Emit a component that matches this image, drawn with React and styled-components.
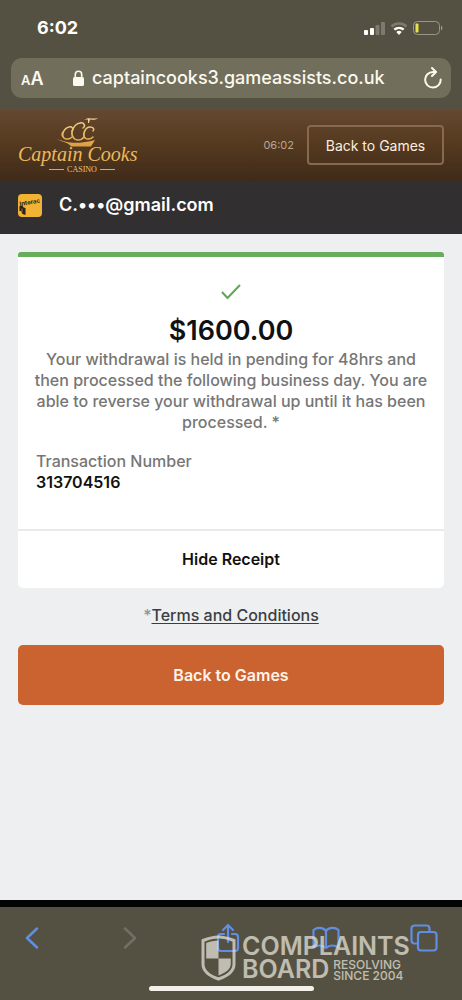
import React from "react";
import styled, { createGlobalStyle } from "styled-components";

const GlobalStyle = createGlobalStyle`
  * { box-sizing: border-box; }
  body {
    margin: 0;
    font-family: Inter, "Liberation Sans", sans-serif;
    background: #edeff1;
  }
  button {
    font-family: inherit;
    margin: 0;
    padding: 0;
    border: 0;
    background: none;
    cursor: pointer;
  }
`;

const Page = styled.div`
  min-height: 100vh;
  display: flex;
  flex-direction: column;
`;

const BrowserTop = styled.div`
  background: #555142;
  padding: 0 11px 12px;
`;

const StatusBar = styled.div`
  height: 58px;
  padding: 0 8px 3px 26px;
  display: flex;
  align-items: center;
  justify-content: space-between;
`;

const Clock = styled.time`
  color: #fff;
  font-size: 18px;
  font-weight: 700;
`;

const AddressBar = styled.form`
  height: 40px;
  border-radius: 11px;
  background: #716e5c;
  padding: 0 4px 0 10px;
  display: flex;
  align-items: center;
  color: #fbf9ee;
`;

const TextSizeButton = styled.button`
  display: flex;
  align-items: baseline;
  color: inherit;
  font-weight: 600;
  font-size: 13px;
  width: 52px;

  span {
    font-size: 18px;
  }
`;

const AddressInput = styled.input`
  flex: 1;
  min-width: 0;
  margin: 0 8px;
  padding: 0;
  border: 0;
  outline: 0;
  background: none;
  color: inherit;
  font: 500 18px/24px Inter, "Liberation Sans", sans-serif;
`;

const IconButton = styled.button`
  width: 28px;
  height: 32px;
  display: flex;
  align-items: center;
  justify-content: center;
  color: ${(p) => p.$color || "inherit"};
`;

const SiteHeader = styled.header`
  height: 71px;
  padding: 0 18px 1px;
  background: linear-gradient(#64482f, #54391f 50%, #3f2b1a);
  display: flex;
  align-items: center;
  justify-content: space-between;
`;

const HeaderActions = styled.div`
  display: flex;
  align-items: center;
  gap: 13px;
`;

const SessionTime = styled.time`
  color: #b9a692;
  font-size: 11px;
`;

const OutlineButton = styled.button`
  width: 137px;
  height: 40px;
  border: 2px solid #87694e;
  border-radius: 4px;
  color: #fbeee0;
  font-size: 14px;
`;

const AccountBar = styled.div`
  height: 53px;
  padding: 0 18px 6px;
  background: #312f30;
  display: flex;
  align-items: center;
  gap: 17px;
  color: #fff;
  font-size: 18px;
  font-weight: 600;
`;

const Main = styled.main`
  flex: 1;
  padding: 18px;
  border-bottom: 7px solid #030504;
`;

const Card = styled.section`
  background: #fff;
  border-top: 5px solid #67ad5b;
  border-radius: 3px 3px 5px 5px;
`;

const CardBody = styled.div`
  padding: 24px 12px 36px;
  display: flex;
  flex-direction: column;
`;

const CheckMark = styled.svg`
  align-self: center;
`;

const Amount = styled.h1`
  margin: 10px 0 0;
  text-align: center;
  font-size: 27px;
  line-height: 36px;
  font-weight: 600;
  color: #111;
`;

const Message = styled.p`
  margin: 0 0 18px;
  text-align: center;
  font-size: 16px;
  line-height: 21px;
  font-weight: 500;
  color: #767676;
`;

const Details = styled.dl`
  margin: 0;
  padding: 0 6px;
  font-size: 16px;
  line-height: 21px;
  font-weight: 500;

  dt { color: #767676; }
  dd { margin: 0; color: #111; font-weight: 600; }
`;

const ReceiptToggle = styled.button`
  width: 100%;
  height: 59px;
  padding-bottom: 2px;
  border-top: 2px solid #e9eaeb;
  font-size: 16px;
  font-weight: 600;
  color: #111;
`;

const Terms = styled.p`
  margin: 17px 0 19px;
  text-align: center;
  font-size: 16px;
  line-height: 21px;
  font-weight: 500;
  color: #8d9698;

  a { color: #3b3e40; text-underline-offset: 2px; }
`;

const PrimaryButton = styled.button`
  width: 100%;
  height: 60px;
  border-radius: 5px;
  background: #cb6330;
  color: #fff3e8;
  font-size: 16px;
  font-weight: 600;
`;

const BrowserBottom = styled.div`
  position: relative;
  height: 93px;
  padding-bottom: 9px;
  background: #555142;
  display: flex;
  flex-direction: column;
  justify-content: space-between;
  align-items: center;
`;

const Toolbar = styled.nav`
  align-self: stretch;
  padding: 15px 24px 0 18px;
  display: flex;
  justify-content: space-between;
`;

const HomeIndicator = styled.div`
  width: 165px;
  height: 5px;
  border-radius: 3px;
  background: #f3f0ea;
`;

const Watermark = styled.div`
  position: absolute;
  left: 201px;
  top: 28px;
  display: flex;
  align-items: center;
  gap: 6px;
  color: #e8e6dc;
  opacity: 0.72;
  pointer-events: none;
`;

const WatermarkName = styled.div`
  font-size: 25px;
  line-height: 23px;
  font-weight: 600;
`;

const WatermarkRow = styled.div`
  display: flex;
  align-items: center;
  gap: 4px;
`;

const WatermarkTag = styled.div`
  font-size: 12px;
  line-height: 11px;
  font-weight: 500;
`;

function StatusIcons() {
  return (
    <svg width="80" height="18" viewBox="0 0 80 18" role="img" aria-label="Signal, Wi-Fi and battery">
      <rect x="1" y="11" width="4" height="5" rx="1" fill="#fff" />
      <rect x="7" y="9" width="4" height="7" rx="1" fill="#fff" />
      <rect x="12.500" y="6" width="4" height="10" rx="1" fill="#7e7b6e" />
      <rect x="18" y="3" width="4" height="13" rx="1" fill="#7e7b6e" />
      <g fill="none" strokeWidth="2.400">
        <path d="M28.500 7.500a11 11 0 0 1 15 0" stroke="#7e7b6e" />
        <path d="M31.300 10.700a7 7 0 0 1 9.400 0" stroke="#fff" />
      </g>
      <path d="M33.300 13a4 4 0 0 1 5.400 0L36 16z" fill="#fff" />
      <rect x="50.500" y="2.500" width="26" height="13" rx="4" fill="none" stroke="#99968a" />
      <rect x="52.500" y="4.500" width="3" height="9" rx="1" fill="#e8e04c" />
      <path d="M78 6.500c2 1 2 4 0 5z" fill="#99968a" />
    </svg>
  );
}

function LockIcon() {
  return (
    <svg width="11" height="16" viewBox="0 0 11 16" aria-hidden="true">
      <rect y="7" width="11" height="9" rx="1.500" fill="currentColor" />
      <path d="M2.300 7.500V4.500a3.200 3.200 0 0 1 6.400 0v3" fill="none" stroke="currentColor" strokeWidth="1.600" />
    </svg>
  );
}

function ReloadIcon() {
  return (
    <svg width="20" height="22" viewBox="0 0 20 22" fill="none" stroke="currentColor" strokeWidth="2" strokeLinecap="round" strokeLinejoin="round" aria-hidden="true">
      <path d="M17.700 12.500A7.800 7.800 0 1 1 10 5h2.500" />
      <path d="M9 1l4 4-4 4" />
    </svg>
  );
}

function CasinoLogo() {
  return (
    <svg width="124" height="60" viewBox="0 0 124 60" role="img" aria-label="Captain Cooks Casino">
      <defs>
        <linearGradient id="gold" x1="0" y1="0" x2="0" y2="31" gradientUnits="userSpaceOnUse">
          <stop offset="0" stopColor="#f8dfa0" />
          <stop offset="1" stopColor="#dc9c3c" />
        </linearGradient>
      </defs>
      <g transform="translate(0 1)">
        <path d="M38 22.500c5 2 10 4 17 4.300 8 .200 15-.800 22-2.800l-4 6.500H53c-2-4-8-4-15-8z" fill="url(#gold)" />
        <path d="M66 4c5-4 8 0 14-2-4 3.500-9 .500-14 2zM70 3h2l-1 4h-1z" fill="url(#gold)" />
        <g fill="none" stroke="url(#gold)" strokeWidth="1.500" strokeLinecap="round">
          <path d="M54 15c2-2 0-5-3-4-5 1-8 8-5 11 2 2 6 1 8-1" />
          <path d="M65 12c3-2 1-6-3-5-6 1-10 9-7 14 2 4 8 4 11 0" />
          <path d="M75 15c2-2 0-4-3-4-5 0-8 8-5 11 2 2 6 1 8-1" />
        </g>
        <path d="M46 14c-2 3-2 6 0 8-3-1-4-5 0-8zM57 10c-4 6-3 12 2 14-6-1-8-8-2-14zM68 14c-2 3-2 7 1 9-4-1-5-6-1-9z" fill="url(#gold)" />
      </g>
      <text x="0" y="46" fontFamily="Liberation Serif, serif" fontStyle="italic" fontSize="20" fill="#ebb95c">Captain Cooks</text>
      <text x="64" y="57" textAnchor="middle" fontFamily="Liberation Serif, serif" fontSize="8" fill="#edc577">CASINO</text>
      <path d="M31 54.500h15M82 54.500h15" stroke="#dca954" />
    </svg>
  );
}

function InteracIcon() {
  return (
    <svg width="24" height="24" viewBox="0 0 24 24" role="img" aria-label="Interac">
      <rect y="1" width="24" height="23" rx="4" fill="#f2b233" />
      <text x="2" y="13" transform="rotate(-10 2 13)" fontFamily="Inter, sans-serif" fontWeight="700" fontSize="6" fill="#211a13">Interac</text>
      <path d="M1.500 13l3-.500 1 2 2 .500v7l-3-1-1.500-3H1.500z" fill="#2a2117" />
      <path d="M4 15.500v4" stroke="#f2b233" strokeWidth=".600" />
    </svg>
  );
}

const line = {
  fill: "none",
  stroke: "currentColor",
  strokeWidth: 2.2,
  strokeLinecap: "round",
  strokeLinejoin: "round",
  "aria-hidden": true,
};

const tools = [
  { label: "Back", color: "#5f8ee4", art: <svg width="14" height="22" viewBox="0 0 14 22" {...line} strokeWidth="2.500"><path d="M12 1.500L2 11l10 9.500" /></svg> },
  { label: "Forward", color: "#737063", art: <svg width="14" height="22" viewBox="0 0 14 22" {...line} strokeWidth="2.500"><path d="M2 1.500L12 11 2 20.500" /></svg> },
  { label: "Share", color: "#5f8ee4", art: <svg width="24" height="30" viewBox="0 0 24 30" {...line}><path d="M8 11H5a3 3 0 0 0-3 3v11a3 3 0 0 0 3 3h14a3 3 0 0 0 3-3V14a3 3 0 0 0-3-3h-3M12 19V2M7 7l5-5 5 5" /></svg> },
  { label: "Bookmarks", color: "#5f8ee4", art: <svg width="28" height="24" viewBox="0 0 28 24" {...line}><path d="M14 5C11 1 5 1 1.500 4v17.500c4-2.500 9-2.500 12.500.500 3.500-3 8.500-3 12.500-.500V4C23 1 17 1 14 5zM14 5v17" /></svg> },
  { label: "Tabs", color: "#5f8ee4", art: <svg width="28" height="28" viewBox="0 0 28 28" {...line}><path d="M7.500 19.500H4.500a3 3 0 0 1-3-3v-12a3 3 0 0 1 3-3h12a3 3 0 0 1 3 3v3" /><rect x="8" y="8" width="18.500" height="18.500" rx="3" /></svg> },
];

function Shield() {
  return (
    <svg width="35" height="46" viewBox="0 0 35 46" aria-hidden="true">
      <path d="M17.500 2C12 2 7 3.500 2 5.500V29c0 8 8 12.500 15.500 15C25 41.500 33 37 33 29V5.500C28 3.500 23 2 17.500 2z" fill="none" stroke="currentColor" strokeWidth="3" />
      <path d="M17.500 5.500C13 5.500 9 6.500 5.200 8v15.500h12.300zM17.500 23.500h12.300V29c0 5-5.500 9-12.300 11.500z" fill="currentColor" />
    </svg>
  );
}

export default function App() {
  return (
    <Page>
      <GlobalStyle />
      <BrowserTop>
        <StatusBar>
          <Clock>6:02</Clock>
          <StatusIcons />
        </StatusBar>
        <AddressBar onSubmit={(e) => e.preventDefault()}>
          <TextSizeButton type="button" aria-label="Text size">A<span>A</span></TextSizeButton>
          <LockIcon />
          <AddressInput type="text" aria-label="Address" defaultValue="captaincooks3.gameassists.co.uk" />
          <IconButton type="button" aria-label="Reload"><ReloadIcon /></IconButton>
        </AddressBar>
      </BrowserTop>
      <SiteHeader>
        <CasinoLogo />
        <HeaderActions>
          <SessionTime>06:02</SessionTime>
          <OutlineButton type="button">Back to Games</OutlineButton>
        </HeaderActions>
      </SiteHeader>
      <AccountBar>
        <InteracIcon />
        <span>C.•••@gmail.com</span>
      </AccountBar>
      <Main>
        <Card>
          <CardBody>
            <CheckMark width="22" height="22" viewBox="0 0 22 22" fill="none" stroke="#5fa655" strokeWidth="2" aria-hidden="true">
              <path d="M2 11l5.500 6L20 4" />
            </CheckMark>
            <Amount>$1600.00</Amount>
            <Message>
              Your withdrawal is held in pending for 48hrs and then processed the following business day. You are able to
              reverse your withdrawal up until it has been processed. *
            </Message>
            <Details>
              <dt>Transaction Number</dt>
              <dd>313704516</dd>
            </Details>
          </CardBody>
          <ReceiptToggle type="button">Hide Receipt</ReceiptToggle>
        </Card>
        <Terms>*<a href="#terms">Terms and Conditions</a></Terms>
        <PrimaryButton type="button">Back to Games</PrimaryButton>
      </Main>
      <BrowserBottom>
        <Toolbar>
          {tools.map((t) => (
            <IconButton key={t.label} type="button" aria-label={t.label} $color={t.color}>{t.art}</IconButton>
          ))}
        </Toolbar>
        <HomeIndicator />
        <Watermark>
          <Shield />
          <div>
            <WatermarkName>COMPLAINTS</WatermarkName>
            <WatermarkRow>
              <WatermarkName>BOARD</WatermarkName>
              <WatermarkTag>RESOLVING<br />SINCE 2004</WatermarkTag>
            </WatermarkRow>
          </div>
        </Watermark>
      </BrowserBottom>
    </Page>
  );
}
